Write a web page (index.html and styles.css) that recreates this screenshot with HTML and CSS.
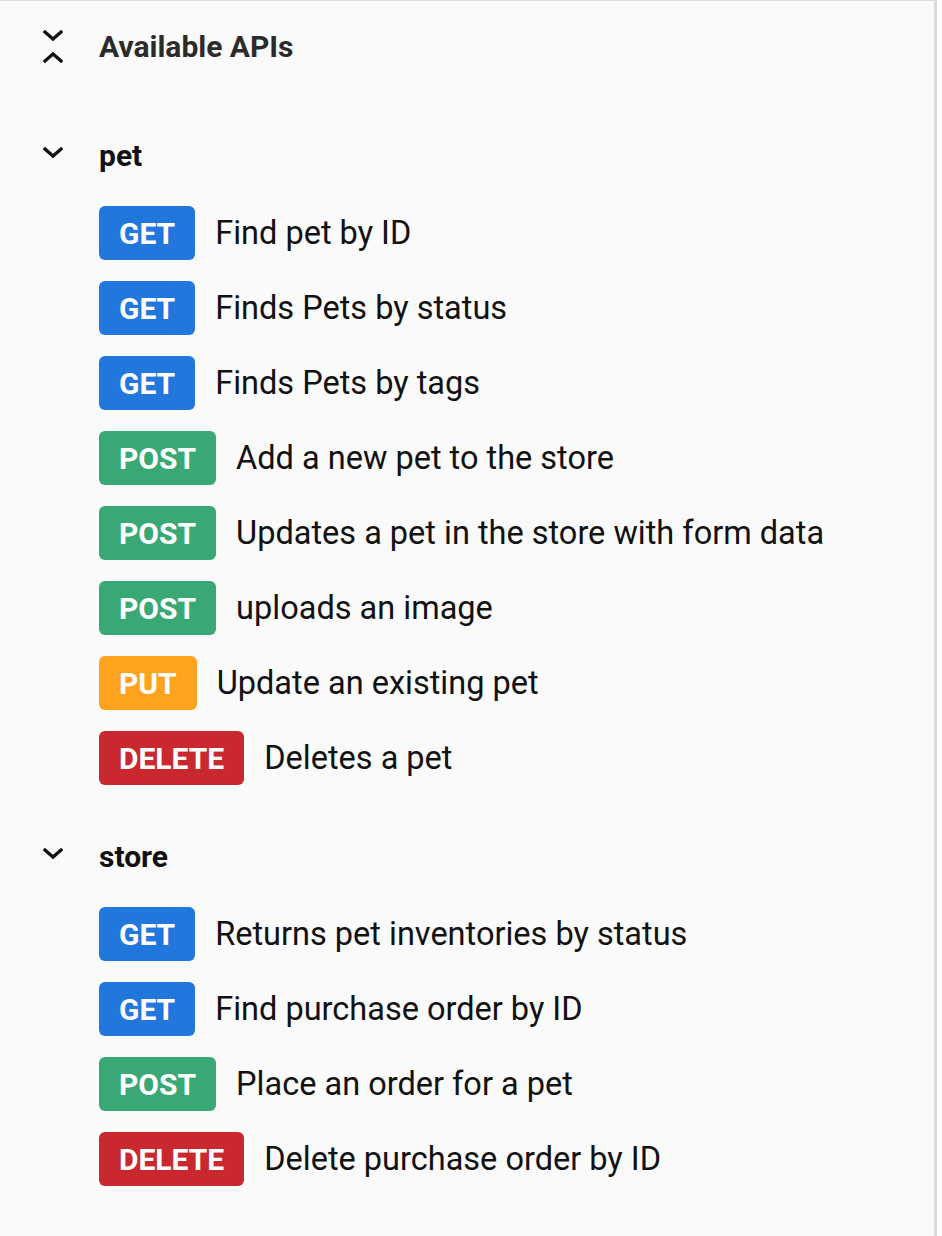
FILE: index.html
```html
<!DOCTYPE html>
<html lang="en">
<head>
  <meta charset="UTF-8">
  <title>Available APIs</title>
  <link rel="stylesheet" href="styles.css">
</head>
<body>
  <div class="panel">
    <!-- Title -->
    <div class="title-row">
      <svg class="icon" width="20" height="34" viewBox="0 0 20 34">
        <polyline points="2,2 10,9 18,2" />
        <polyline points="2,31 10,24 18,31" />
      </svg>
      <span class="title">Available APIs</span>
    </div>

    <!-- pet -->
    <div class="group">
      <div class="group-header">
        <svg class="icon" width="20" height="14" viewBox="0 0 20 14">
          <polyline points="2,3 10,10 18,3" />
        </svg>
        <span class="group-name">pet</span>
      </div>
      <ul class="ops">
        <li class="op"><span class="badge get">GET</span><span class="op-label">Find pet by ID</span></li>
        <li class="op"><span class="badge get">GET</span><span class="op-label">Finds Pets by status</span></li>
        <li class="op"><span class="badge get">GET</span><span class="op-label">Finds Pets by tags</span></li>
        <li class="op"><span class="badge post">POST</span><span class="op-label">Add a new pet to the store</span></li>
        <li class="op"><span class="badge post">POST</span><span class="op-label">Updates a pet in the store with form data</span></li>
        <li class="op"><span class="badge post">POST</span><span class="op-label">uploads an image</span></li>
        <li class="op"><span class="badge put">PUT</span><span class="op-label">Update an existing pet</span></li>
        <li class="op"><span class="badge delete">DELETE</span><span class="op-label">Deletes a pet</span></li>
      </ul>
    </div>

    <!-- store -->
    <div class="group">
      <div class="group-header">
        <svg class="icon" width="20" height="14" viewBox="0 0 20 14">
          <polyline points="2,3 10,10 18,3" />
        </svg>
        <span class="group-name">store</span>
      </div>
      <ul class="ops">
        <li class="op"><span class="badge get">GET</span><span class="op-label">Returns pet inventories by status</span></li>
        <li class="op"><span class="badge get">GET</span><span class="op-label">Find purchase order by ID</span></li>
        <li class="op"><span class="badge post">POST</span><span class="op-label">Place an order for a pet</span></li>
        <li class="op"><span class="badge delete">DELETE</span><span class="op-label">Delete purchase order by ID</span></li>
      </ul>
    </div>
  </div>
</body>
</html>
```

FILE: styles.css
```css
html, body {
  margin: 0;
  padding: 0;
  height: 100%;
}

body {
  font-family: Roboto, "Liberation Sans", sans-serif;
  background-color: #fff;
  color: #111;
}

.panel {
  box-sizing: border-box;
  width: 937px;
  min-height: 100%;
  background-color: #fafafa;
  border-top: 1px solid #dedede;
  border-right: 3px solid #dcdcdc;
  padding-left: 43px;
}

.icon {
  flex: none;
  fill: none;
  stroke: #111;
  stroke-width: 3.2;
  stroke-linecap: square;
}

.title-row {
  display: flex;
  align-items: center;
  gap: 36px;
  height: 91px;
}

.title {
  font-size: 30px;
  font-weight: 700;
  color: #2b2b2b;
}

.group {
  margin-top: 36px;
}

.group + .group {
  margin-top: 44px;
}

.group-header {
  display: flex;
  align-items: center;
  gap: 36px;
  height: 54px;
}

.group-header .icon {
  margin-top: -4px;
}

.group-name {
  font-size: 30px;
  font-weight: 700;
}

.ops {
  list-style: none;
  margin: 24px 0 0 56px;
  padding: 0;
  display: flex;
  flex-direction: column;
  gap: 21px;
}

.op {
  display: flex;
  align-items: center;
  gap: 20px;
  height: 54px;
}

.badge {
  display: flex;
  align-items: center;
  justify-content: center;
  height: 54px;
  padding: 0 20px;
  border-radius: 6px;
  color: #fff;
  font-size: 30px;
  font-weight: 700;
}

.badge.get { background-color: #2177dc; }
.badge.post { background-color: #3aa875; }
.badge.put { background-color: #ffa21d; }
.badge.delete { background-color: #c9282e; }

.op-label {
  font-size: 32.5px;
  color: #111;
}
```
